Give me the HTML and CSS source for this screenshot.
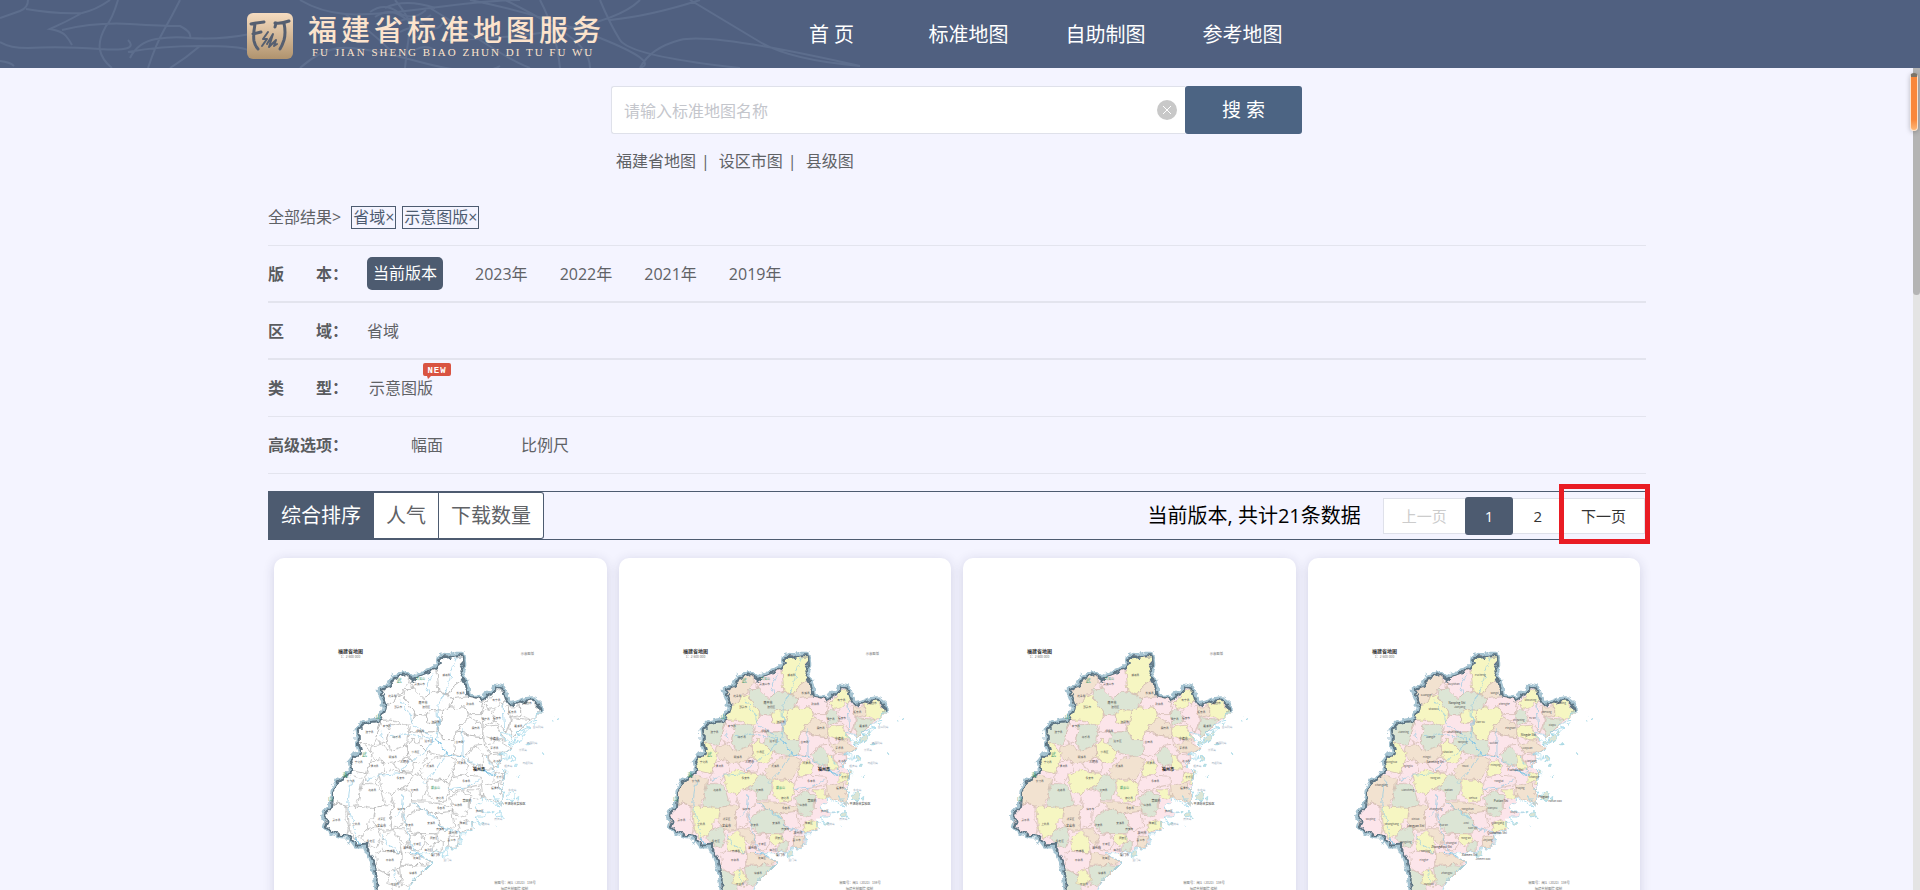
FILE: index.html
```html
<!DOCTYPE html>
<html lang="zh-CN">
<head>
<meta charset="utf-8">
<title>福建省标准地图服务</title>
<link rel="stylesheet" href="styles.css">
</head>
<body>
<svg class="defs" aria-hidden="true">
  <defs>
    <filter id="rough" x="-5%" y="-5%" width="110%" height="110%" color-interpolation-filters="sRGB">
      <feTurbulence type="fractalNoise" baseFrequency="0.06" numOctaves="2" seed="4" result="n"/>
      <feDisplacementMap in="SourceGraphic" in2="n" scale="20" xChannelSelector="R" yChannelSelector="G"/>
    </filter>
    <path id="border" d="M337 1060L328 990L318 955L302 925L303 912L270 915L255 895L245 885L225 883L200 875L180 862L185 845L175 830L180 815L198 800L200 770L205 745L218 722L240 710L258 690L255 665L270 645L285 635L278 610L278 585L275 570L290 552L315 545L340 542L352 515L358 490L348 465L342 450L370 440L385 412L412 400L440 420L455 410L490 395L518 375L525 350L545 352L570 345L588 345L590 375L582 390L598 430L605 470L625 472L645 480L670 462L685 455L690 440L708 445L715 475L730 495L755 490L780 480L800 478L815 490L820 515"/>
  </defs>

  <symbol id="map-land" viewBox="24 54 996 1200">
    <g filter="url(#rough)">
      <use href="#border" class="halo"/>
      <path class="land" d="M337 1110L328 990L318 955L302 925L303 912L270 915L255 895L245 885L225 883L200 875L180 862L185 845L175 830L180 815L198 800L200 770L205 745L218 722L240 710L258 690L255 665L270 645L285 635L278 610L275 570L290 552L340 542L352 515L358 490L342 450L370 440L385 412L412 400L440 420L455 410L490 395L518 375L525 350L588 345L590 375L582 390L605 470L625 472L645 480L670 462L685 455L690 440L708 445L715 475L730 495L755 490L800 478L815 490L820 515L805 530L800 545L775 555L770 570L750 580L740 590L720 580L705 590L715 600L730 620L725 635L700 640L712 655L690 675L715 700L712 730L700 745L710 770L705 795L690 775L680 765L645 770L650 780L620 800L640 815L670 815L650 830L620 830L615 850L620 870L600 880L580 880L585 905L570 925L545 920L540 930L500 940L450 940L480 955L500 965L480 985L460 1000L440 1025L425 1050L405 1090Z"/>
      <g class="county">
        <path class="o" d="M346 455L372 440L385 412L412 400L432 425L415 445L395 470L380 490L358 498Z"/>
        <path class="p" d="M432 425L490 395L512 388L520 430L518 456L500 455L470 475L440 445Z"/>
        <path class="y" d="M512 388L525 352L586 347L585 390L592 416L565 435L545 465L518 456Z"/>
        <path class="o" d="M565 435L592 416L605 470L590 478L560 475L545 465Z"/>
        <path class="g" d="M415 445L440 445L470 475L500 455L545 465L560 475L550 500L528 510L490 508L480 525L445 522L425 490L410 462Z"/>
        <path class="y" d="M358 498L380 490L395 470L410 462L425 490L445 522L445 552L420 555L375 540L345 540Z"/>
        <path class="p" d="M560 475L605 470L652 485L645 520L610 520L600 505L550 500Z"/>
        <path class="y" d="M528 510L550 500L600 505L610 530L590 550L562 598L530 598L515 568L520 545Z"/>
        <path class="y" d="M490 508L528 510L520 545L485 550L480 525Z"/>
        <path class="p" d="M445 522L480 525L485 550L520 548L515 568L500 575L470 575L430 570Z"/>
        <path class="o" d="M590 550L610 530L650 558L650 590L610 585L575 575Z"/>
        <path class="p" d="M570 575L610 585L650 590L655 612L622 615L595 650L562 638L562 600Z"/>
        <path class="g" d="M470 575L500 575L515 568L530 598L562 598L565 638L540 650L500 640L485 635L460 610Z"/>
        <path class="g" d="M275 570L290 552L315 545L345 540L332 580L320 615L278 608Z"/>
        <path class="p" d="M345 540L375 540L370 560L362 600L342 612L328 592Z"/>
        <path class="g" d="M370 558L410 550L430 570L425 600L405 625L375 632L362 600Z"/>
        <path class="y" d="M420 612L440 600L460 610L485 635L470 672L445 665L425 645Z"/>
        <path class="o" d="M318 618L345 612L375 632L418 615L425 648L388 668L350 670L315 645Z"/>
        <path class="y" d="M278 605L300 615L318 640L310 668L300 700L258 690L255 665L285 635Z"/>
        <path class="p" d="M310 668L345 655L357 685L340 705L325 732L298 718Z"/>
        <path class="p" d="M385 665L425 648L445 665L440 695L400 697Z"/>
        <path class="y" d="M340 708L370 690L400 697L445 700L430 730L400 748L380 765L350 755Z"/>
        <path class="o" d="M203 745L220 720L258 705L290 715L280 760L265 798L245 800L215 785L198 795Z"/>
        <path class="g" d="M285 730L330 730L345 757L355 790L325 805L300 815L275 795Z"/>
        <path class="o" d="M460 690L500 655L540 645L568 660L560 690L540 718L500 715L478 725Z"/>
        <path class="g" d="M445 700L480 715L480 750L470 780L440 778L412 750Z"/>
        <path class="y" d="M485 722L530 718L550 740L540 782L510 785L485 765Z"/>
        <path class="y" d="M565 672L585 658L607 675L600 705L560 707Z"/>
        <path class="g" d="M605 650L625 615L650 640L655 672L622 680Z"/>
        <path class="p" d="M545 740L560 712L605 705L645 708L645 733L600 742L560 755Z"/>
        <path class="p" d="M375 760L405 745L435 755L437 790L410 820L410 850L375 865L370 830L385 800Z"/>
        <path class="o" d="M325 805L355 790L385 800L370 830L372 868L340 870L322 840Z"/>
        <path class="p" d="M195 800L215 785L240 800L240 840L250 860L245 885L200 875L180 862L178 820Z"/>
        <path class="y" d="M245 800L280 798L325 805L320 832L302 850L300 880L265 895L250 870Z"/>
        <path class="g" d="M300 870L335 858L345 890L330 925L305 912L288 895Z"/>
        <path class="o" d="M437 785L490 785L545 795L575 802L560 815L505 820L460 805Z"/>
        <path class="g" d="M425 825L460 805L505 820L520 850L535 872L480 880L440 878L418 850Z"/>
        <path class="p" d="M505 820L560 812L565 855L535 872Z"/>
        <path class="g" d="M550 772L585 752L612 770L612 812L575 832L560 808Z"/>
        <path class="o" d="M645 735L690 728L705 745L708 790L650 770Z"/>
        <path class="y" d="M605 750L640 745L650 770L625 778Z"/>
        <path class="y" d="M342 905L375 868L400 892L408 932L370 937L350 928Z"/>
        <path class="o" d="M380 865L415 865L432 890L422 918L400 895Z"/>
        <path class="p" d="M432 885L465 880L475 905L460 932L430 925Z"/>
        <path class="y" d="M475 880L512 880L516 902L490 917L475 905Z"/>
        <path class="p" d="M328 940L355 930L406 936L405 978L370 1005L332 980Z"/>
        <path class="o" d="M408 938L450 945L500 965L460 972L408 975Z"/>
        <path class="g" d="M400 980L460 972L490 975L460 1005L435 1030L405 1035Z"/>
        <path class="g" d="M330 985L370 1005L380 1100L337 1100Z"/>
        <path class="y" d="M370 992L390 985L405 1015L395 1037L365 1030Z"/>
        <path class="y" d="M655 490L685 455L708 445L716 482L700 500L670 508Z"/>
        <path class="g" d="M645 518L670 505L682 545L650 555Z"/>
        <path class="p" d="M680 515L700 490L725 500L732 540L722 578L705 562L685 545Z"/>
        <path class="o" d="M725 500L757 500L765 525L732 532Z"/>
        <path class="y" d="M757 492L800 478L820 515L795 540L765 525Z"/>
        <path class="g" d="M735 532L790 538L770 560L740 590L730 560Z"/>
        <path class="y" d="M650 560L690 555L715 600L680 597L650 585Z"/>
        <path class="o" d="M655 612L700 600L730 620L725 635L670 637Z"/>
        <path class="p" d="M665 645L705 640L705 668L682 682Z"/>
        <path class="y" d="M685 700L715 695L712 730L682 725Z"/>
        <path class="y" d="M648 645L665 650L682 688L655 690Z"/>
        <path class="y" d="M575 850L600 840L620 850L615 870L580 877Z"/>
        <path class="o" d="M545 890L580 885L577 920L548 920Z"/>
        <path class="g" d="M505 905L528 902L528 930L500 937Z"/>
      </g>
      <use href="#border" class="edge"/>
      <path class="coast" d="M820 515L800 530L812 540L790 548L775 555L790 560L770 570L752 575L760 590L740 600L735 585L720 580L700 575L708 595L725 600L735 618L725 635L700 640L730 650L712 655L690 675L715 700L712 730L700 745L715 755L710 770L705 795L690 775L680 765L700 800L645 770L650 780L620 800L640 815L670 815L650 830L620 830L640 845L615 850L625 865L600 880L580 880L585 905L570 925L545 920L540 930L500 940L450 940L480 955L500 965L480 985L460 1000L440 1025L425 1050"/>
      <path class="isle" d="M750 590l12-8 10 4-4 14-14 8-10-4zM770 575l8-4 2 8-8 4zM728 605l10-2 4 8-10 2zM735 650l10 2-2 10-10-2zM724 765l12-8 8 10-8 14-12-4zM752 770l8 4-4 6zM690 820l12-4 4 10-12 4zM705 830l8 0 0 8zM678 810l6 4-6 4zM525 940l14-6 10 8-14 8-10-2zM800 550l10 2-6 6zM775 610l8-4 2 8zM748 672l8 0-4 8zM755 705l6 2-4 4zM828 640l4 0-2 4zM855 541l5 1-2 4zM872 532l4 1-2 3zM686 856l4 0-2 3zM640 850l10-8 2 10zM715 690l10 4-4 8z"/>
    </g>
  </symbol>

  <symbol id="map-rivers" viewBox="24 54 996 1200">
    <g class="river" filter="url(#rough)">
      <path d="M570 350L555 400L545 440L515 500L518 560L510 600L545 640L590 650L640 680L670 705L690 690M500 400L480 440L490 465M400 480L430 520L445 560L480 575L500 600M345 570L350 600M370 590L430 580L500 600M500 600L470 640L430 665L400 700L340 705L300 720M540 640L500 700L470 730M590 570L590 650M255 715L245 790L262 860L275 905M410 760L405 810L385 830M410 820L425 860L430 900L450 940M545 745L600 740L640 720M440 790L490 820L530 860L580 875M350 880L360 910L400 935M385 985L390 1030M710 490L715 570M660 650L680 690"/>
      <path class="wide" d="M510 600L545 640L590 650M640 690L690 705M270 895L280 912M430 935L475 948"/>
    </g>
  </symbol>

  <symbol id="map-cn" viewBox="24 54 996 1200">
    <g class="names">
      <text x="540" y="406">浦城县</text><text x="460" y="435">武夷山市</text><text x="378" y="470">光泽县</text><text x="583" y="461">松溪县</text><text x="612" y="493">政和县</text><text x="396" y="504">邵武市</text><text x="480" y="503">建阳区</text><text x="508" y="547">建瓯市</text><text x="462" y="575">顺昌县</text><text x="487" y="606">延平区</text><text x="362" y="559">泰宁县</text><text x="310" y="579">建宁县</text><text x="392" y="594">将乐县</text><text x="628" y="565">屏南县</text><text x="580" y="609">古田县</text><text x="658" y="539">周宁县</text><text x="692" y="535">福安市</text><text x="690" y="483">寿宁县</text><text x="738" y="518">柘荣县</text><text x="784" y="490">福鼎市</text><text x="756" y="559">霞浦县</text><text x="684" y="627">罗源县</text><text x="692" y="666">连江县</text><text x="702" y="714">长乐区</text><text x="686" y="747">福清市</text><text x="600" y="725">永泰县</text><text x="586" y="672">闽清县</text><text x="492" y="681">尤溪县</text><text x="448" y="637">沙县区</text><text x="380" y="654">明溪县</text><text x="278" y="669">宁化县</text><text x="325" y="681">清流县</text><text x="403" y="717">永安市</text><text x="318" y="752">连城县</text><text x="254" y="725">长汀县</text><text x="445" y="753">大田县</text><text x="521" y="777">德化县</text><text x="524" y="806">永春县</text><text x="576" y="798">仙游县</text><text x="405" y="809">漳平市</text><text x="346" y="838">新罗区</text><text x="211" y="841">武平县</text><text x="270" y="855">上杭县</text><text x="314" y="906">永定区</text><text x="495" y="852">安溪县</text><text x="430" y="858">华安县</text><text x="522" y="868">南安市</text><text x="503" y="897">同安区</text><text x="453" y="913">长泰区</text><text x="374" y="936">南靖县</text><text x="371" y="961">平和县</text><text x="440" y="1000">漳浦县</text><text x="386" y="1034">云霄县</text><text x="640" y="816">秀屿区</text><text x="592" y="850">泉港区</text><text x="556" y="902">晋江市</text><text x="486" y="933">海沧区</text><text x="452" y="957">龙海区</text>
      <g class="city"><text x="470" y="491">南平市</text><text x="415" y="668">三明市</text><text x="346" y="860">龙岩市</text><text x="602" y="784">莆田市</text><text x="684" y="598">宁德市</text><text x="560" y="882">泉州市</text><text x="424" y="926">漳州市</text><text x="508" y="947">厦门市</text><text class="capital" x="638" y="691">福州市</text><text x="746" y="793">平潭综合实验区</text></g>
      <g class="sea"><text x="815" y="564">台山列岛</text><text x="797" y="611">四礵列岛</text><text x="770" y="632">浮鹰岛</text><text x="784" y="671">马祖列岛</text><text x="726" y="679">粗芦岛</text><text x="738" y="752">东庠岛</text><text x="658" y="855">湄洲岛</text><text x="544" y="962">金门岛</text><text x="696" y="838">南日岛</text></g>
      <g class="range"><text x="399" y="426">武</text><text x="336" y="534">山</text><text x="295" y="648">武</text><text x="237" y="708">夷</text><text x="193" y="778">山</text><text class="peak" x="463" y="420">武夷山</text><text class="peak" x="508" y="746">戴云山</text></g>
    </g>
    <text class="edition" x="783" y="345">示意图版</text>
  </symbol>

  <symbol id="map-en" viewBox="24 54 996 1200">
    <g class="names">
      <text x="540" y="406">Pucheng</text><text x="460" y="433">Wuyishan</text><text x="378" y="466">Guangze</text><text x="583" y="461">Songxi</text><text x="612" y="495">Zhenghe</text><text x="400" y="508">Shaowu</text><text x="478" y="503">Jianyang</text><text x="540" y="548">Jian'ou</text><text x="462" y="577">Shunchang</text><text x="487" y="607">Yanping</text><text x="310" y="579">Jianning</text><text x="392" y="594">Jiangle</text><text x="630" y="565">Pingnan</text><text x="580" y="610">Gutian</text><text x="655" y="541">Zhouning</text><text x="696" y="535">Fu'an</text><text x="690" y="483">Shouning</text><text x="738" y="518">Zherong</text><text x="784" y="490">Fuding</text><text x="756" y="557">Xiapu</text><text x="680" y="627">Luoyuan</text><text x="692" y="665">Lianjiang</text><text x="702" y="714">Changle</text><text x="660" y="745">Fuqing</text><text x="596" y="725">Yongtai</text><text x="586" y="678">Minqing</text><text x="495" y="681">Youxi</text><text x="443" y="637">Shaxian</text><text x="380" y="654">Mingxi</text><text x="275" y="667">Ninghua</text><text x="325" y="681">Qingliu</text><text x="405" y="717">Yong'an</text><text x="323" y="752">Liancheng</text><text x="244" y="738">Changting</text><text x="445" y="753">Datian</text><text x="518" y="776">Dehua</text><text x="502" y="809">Yongchun</text><text x="576" y="806">Xianyou</text><text x="407" y="810">Zhangping</text><text x="346" y="838">Xinluo</text><text x="211" y="840">Wuping</text><text x="275" y="855">Shanghang</text><text x="317" y="907">Yongding</text><text x="498" y="852">Anxi</text><text x="430" y="858">Hua'an</text><text x="517" y="866">Nan'an</text><text x="497" y="897">Tong'an</text><text x="453" y="912">Changtai</text><text x="376" y="936">Nanjing</text><text x="371" y="961">Pinghe</text><text x="440" y="1000">Zhangpu</text><text x="386" y="1034">Yunxiao</text><text x="640" y="818">Xiuyu</text><text x="592" y="850">Quangang</text><text x="562" y="902">Jinjiang</text><text x="764" y="786">Haitan Dao</text><text x="548" y="960">Jinmen Dao</text>
      <g class="city"><text x="470" y="490">Nanping Shi</text><text x="405" y="669">Sanming Shi</text><text x="346" y="860">Longyan Shi</text><text x="602" y="786">Putian Shi</text><text x="684" y="586">Ningde Shi</text><text x="590" y="882">Quanzhou Shi</text><text x="424" y="924">Zhangzhou Shi</text><text x="508" y="946">Xiamen Shi</text><text x="645" y="692">Fuzhou Shi</text><text x="730" y="772">Pingtan</text></g>
    </g>
  </symbol>

  <symbol id="map-caption" viewBox="24 54 996 1200">
    <text class="sheet-title" x="253" y="338">福建省地图</text>
    <text class="sheet-note" x="253" y="355">1：2 600 000</text>
    <text class="sheet-note" x="746" y="1031">审图号：闽S〔2023〕159号</text>
    <text class="sheet-note" x="744" y="1048">福建省制图院 编制</text>
  </symbol>
</svg>

<header class="topbar">
  <svg class="topbar-lines" viewBox="0 0 900 68" preserveAspectRatio="xMinYMid slice" aria-hidden="true">
    <path d="M28 0Q28 8 20 11L0 18M26 9Q54 14 82 13Q96 10 110 0M82 13Q66 22 50 29Q62 31 66 36T72 45M62 30Q96 22 130 24T180 26Q192 32 190 38Q174 36 156 39T130 58M0 42Q10 48 28 48Q60 46 100 49T128 40M118 0Q112 20 106 26Q98 40 100 50T112 68M180 0Q172 16 164 30T148 68M128 52Q160 46 200 46T248 50M200 46Q186 58 170 68M0 61Q10 62 14 66M190 38Q220 40 250 34M300 0Q320 12 345 14T430 8T520 0M300 68Q320 50 340 48T420 62T500 66M345 14Q370 30 390 50M395 0Q412 20 410 30T405 68M430 8Q450 20 480 40T530 68M505 0Q530 12 560 30T590 68M470 0Q540 14 600 38T640 68M440 40Q500 40 560 30T640 0M540 0Q556 30 560 68M600 0Q610 24 620 40T740 68M610 20Q650 16 700 0M640 68Q650 48 680 40T860 66M690 0Q730 24 760 42T860 66"/>
    <path d="M370 12q14-10 28 0t28-2M375 17q14-10 28 0t28-2M395 24q14-10 28 0t20-2M400 32q14-8 24 0M410 40q14-8 24 0M415 50q10-6 20 0M385 8q20-10 50 0"/>
  </svg>
  <a class="brand" href="#">
    <svg class="brand-mark" viewBox="0 0 46 46" aria-hidden="true">
      <defs><linearGradient id="gold" x2="0" y2="1"><stop offset="0" stop-color="#f6dcc0"/><stop offset="1" stop-color="#b0936e"/></linearGradient></defs>
      <rect width="46" height="46" rx="6" fill="url(#gold)"/>
      <path class="ink" d="M4 11Q8 10 17 9M8 11Q6 22 7 28Q8 33 11 36M6 21L14 19M28 10Q34 11 42 8M29 10L28 14M37 10Q39 20 37 27Q35 33 33 36"/>
      <path class="ink fine" d="M21 19L16 26L20 26L15 33M20 31L26 21L22 34L29 27L27 33L30 31"/>
    </svg>
    <span class="brand-text">
      <strong>福建省标准地图服务</strong>
      <small>FU JIAN SHENG BIAO ZHUN DI TU FU WU</small>
    </span>
  </a>
  <nav class="nav">
    <a href="#">首 页</a><a href="#">标准地图</a><a href="#">自助制图</a><a href="#">参考地图</a>
  </nav>
</header>

<main class="page">
  <form class="search">
    <div class="search-field">
      <input type="text" aria-label="标准地图名称" placeholder="请输入标准地图名称">
      <button class="clear" type="button" aria-label="清空">
        <svg viewBox="0 0 20 20"><circle cx="10" cy="10" r="10"/><path d="M6 6l8 8M14 6l-8 8"/></svg>
      </button>
    </div>
    <button class="submit" type="submit">搜 索</button>
  </form>
  <div class="quick"><a href="#">福建省地图</a><i>|</i><a href="#">设区市图</a><i>|</i><a href="#">县级图</a></div>

  <section class="filters">
    <div class="crumbs"><span>全部结果&gt;</span><button type="button">省域×</button><button type="button">示意图版×</button></div>
    <div class="row thick"><b class="name"><span>版</span><span>本：</span></b><div class="years"><a class="on" href="#">当前版本</a><a href="#">2023年</a><a href="#">2022年</a><a href="#">2021年</a><a href="#">2019年</a></div></div>
    <div class="row thick"><b class="name"><span>区</span><span>域：</span></b><a href="#">省域</a></div>
    <div class="row"><b class="name"><span>类</span><span>型：</span></b><a class="with-badge" href="#">示意图版<svg class="badge" viewBox="0 0 28 16" aria-label="NEW"><path d="M2 0h24q2 0 2 2v9q0 2-2 2H8l-3 3-1-3H2q-2 0-2-2V2q0-2 2-2z"/><text x="14" y="10">NEW</text></svg></a></div>
    <div class="row"><b class="name">高级选项：</b><div class="advanced"><a href="#">幅面</a><a href="#">比例尺</a></div></div>
  </section>

  <section class="toolbar">
    <div class="sorts"><button class="on" type="button">综合排序</button><button type="button">人气</button><button type="button">下载数量</button></div>
    <p class="total">当前版本, 共计21条数据</p>
    <div class="pager">
      <button type="button" disabled>上一页</button><button class="on" type="button">1</button><button type="button">2</button><span class="next"><button type="button">下一页</button></span>
    </div>
  </section>

  <section class="cards">
    <a class="card" href="#"><svg class="map blank" viewBox="0 0 996 1200"><use href="#map-land"/><use href="#map-rivers"/><use href="#map-cn"/><use href="#map-caption"/></svg></a>
    <a class="card" href="#"><svg class="map" viewBox="0 0 996 1200"><use href="#map-land"/><use href="#map-rivers"/><use href="#map-cn"/><use href="#map-caption"/></svg></a>
    <a class="card" href="#"><svg class="map" viewBox="0 0 996 1200"><use href="#map-land"/><use href="#map-cn"/><use href="#map-caption"/></svg></a>
    <a class="card" href="#"><svg class="map" viewBox="0 0 996 1200"><use href="#map-land"/><use href="#map-rivers"/><use href="#map-en"/><use href="#map-caption"/></svg></a>
  </section>
</main>
<div class="scrollbar" aria-hidden="true"><i class="thumb"></i><i class="marker"></i></div>
</body>
</html>
```
FILE: styles.css
```css
* { box-sizing: border-box; }
body {
  margin: 0;
  height: 100vh;
  display: flex;
  flex-direction: column;
  background: #f4f4ff;
  color: #606266;
  font: 16px/24px "Open Sans", "Noto Sans CJK SC", sans-serif;
}
a { color: inherit; text-decoration: none; }
i { font-style: normal; }
button, input { font: inherit; color: inherit; margin: 0; border: 0; background: none; padding: 0; }
.defs { position: absolute; width: 0; height: 0; }

.topbar {
  position: relative;
  flex: none;
  height: 68px;
  padding-left: 247px;
  display: flex;
  align-items: center;
  background: #506080;
  color: #fff;
}
.topbar-lines { position: absolute; top: 0; left: 0; width: 900px; height: 68px; fill: none; stroke: #6b7c9b; stroke-width: 2; opacity: .5; }
.brand { position: relative; display: flex; gap: 15px; width: 516px; padding-top: 4px; }
.brand-mark { width: 46px; height: 46px; }
.ink { fill: none; stroke: #565f70; stroke-width: 3; stroke-linecap: round; stroke-linejoin: round; }
.ink.fine { stroke-width: 2; }
.brand-text { display: flex; flex-direction: column; color: #fce3cc; white-space: nowrap; }
.brand-text strong { font-size: 29px; line-height: 33px; font-weight: 500; letter-spacing: 4px; }
.brand-text small { font: 11px/13px "Liberation Serif", serif; letter-spacing: 2px; padding-left: 4px; }
.nav { position: relative; display: flex; font-size: 20px; }
.nav a { width: 137px; text-align: center; line-height: 28px; padding-top: 1px; }

.page { flex: 1; min-height: 0; overflow-y: auto; scrollbar-width: none; padding: 18px 274px 40px 268px; }
.search { display: flex; width: 691px; margin-left: 343px; height: 48px; }
.search-field { flex: 1; display: flex; align-items: center; background: #fff; border: 1px solid #dfe1ea; border-right: 0; border-radius: 3px 0 0 3px; padding: 0 8px 0 12px; }
.search-field input { flex: 1; outline: 0; height: 44px; padding-top: 2px; }
.search-field input::placeholder { color: #c4c6cc; }
.clear { width: 20px; height: 20px; }
.clear svg { display: block; fill: #c8c8c8; }
.clear path { stroke: #fff; stroke-width: 1; }
.submit { width: 117px; background: #4c6483; color: #fff; font-size: 19px; border-radius: 3px; }
.quick { display: flex; margin: 15px 0 0 348px; }
.quick i { margin: 0 9px 0 5px; }

.filters { margin-top: 32px; }
.crumbs { display: flex; align-items: center; height: 41px; padding-bottom: 16px; border-bottom: 1px solid #e3e4ee; }
.crumbs span { margin-right: 10px; }
.crumbs button { border: 1px solid #4d5b70; height: 23px; line-height: 20px; margin-right: 6px; padding: 0 1px; color: #4d5b70; }
.row { display: flex; align-items: center; height: 57px; border-bottom: 1px solid #e3e4ee; }
.row.thick { border-bottom-width: 2px; }
.name { display: flex; justify-content: space-between; width: 80px; margin-right: 19px; color: #5a5c60; white-space: nowrap; }
.years { display: flex; align-items: center; gap: 32px; }
.years .on { background: #4d5b70; color: #fff; border-radius: 5px; padding: 4px 6px 5px; }
.with-badge { position: relative; padding-left: 2px; }
.badge { position: absolute; left: 56px; top: -13px; width: 28px; height: 16px; fill: #d95442; }
.badge text { fill: #fff; font: bold 9px "Liberation Mono", monospace; letter-spacing: 1px; text-anchor: middle; }
.advanced { display: flex; gap: 78px; padding-left: 44px; }

.toolbar { display: flex; align-items: center; margin-top: 17px; height: 49px; border: 1px solid #4d5b70; }
.sorts { display: flex; align-self: stretch; font-size: 20px; background: #fff; border: 1px solid #4d5b70; border-width: 1px 1px 1px 0; border-radius: 3px; }
.sorts button { padding: 0 12px; border-left: 1px solid #4d5b70; }
.sorts .on { background: #4d5b70; color: #fff; margin: -1px 0; padding: 0 12px 0 11px; }
.total { margin: 0 22px 0 auto; font-size: 20px; color: #000; }
.pager { display: flex; align-items: center; font-size: 15px; color: #333; }
.pager button { height: 36px; background: #fff; border: 1px solid #dfe1ea; border-width: 1px 0; padding: 0 20px; }
.pager button:disabled { color: #ccc; border-left-width: 1px; padding: 0 18px; }
.pager .on { height: 38px; background: #4d5b70; color: #fff; border-radius: 3px; border: 0; }
.next { position: relative; }
.pager .next button { border-width: 1px; padding: 0 18px; }
.next::after { content: ""; position: absolute; inset: -14px -5px -10px -3px; border: 5px solid #e91c24; }

.cards { display: grid; grid-template-columns: repeat(4, 1fr); gap: 12px; padding: 18px 6px; }
.card { background: #fff; border-radius: 10px; box-shadow: 0 2px 12px rgba(40, 40, 90, .16); }
.map { display: block; width: 100%; font-family: "Noto Sans CJK SC", sans-serif; --o: #f2e2d0; --p: #fce5ea; --y: #f6f6c2; --g: #dce5d5; --line: #cdb6aa; }
.map.blank { --o: #fff; --p: #fff; --y: #fff; --g: #fff; --line: #aaa; }
.halo { fill: none; stroke: #a5c3d1; stroke-width: 20; stroke-linejoin: round; }
.land { fill: var(--p); }
.county { stroke: var(--line); stroke-width: 2; }
.o { fill: var(--o); }
.p { fill: var(--p); }
.y { fill: var(--y); }
.g { fill: var(--g); }
.edge { fill: none; stroke: #5d7584; stroke-width: 6; stroke-linejoin: round; }
.coast { fill: none; stroke: #8fd0e6; stroke-width: 2; }
.isle { fill: var(--g); stroke: #8fd0e6; stroke-width: 2; }
.river { fill: none; stroke: #8cc8e4; stroke-width: 2; }
.river .wide { stroke-width: 4; }
.names { font-size: 8px; text-anchor: middle; fill: #555; }
.city { font-size: 9px; fill: #333; }
.capital { font-size: 12px; font-weight: bold; fill: #111; }
.sea { fill: #9ab; }
.range { font-size: 15px; fill: #3f9a6a; }
.peak { font-size: 9px; }
.edition { font-size: 10px; text-anchor: middle; fill: #777; }
.sheet-title { font-size: 15px; font-weight: bold; text-anchor: middle; fill: #333; }
.sheet-note { font-size: 10px; text-anchor: middle; fill: #777; }

.scrollbar { position: fixed; top: 68px; right: 0; bottom: 0; width: 7px; background: #e4e4e4; }
.thumb { display: block; height: 227px; background: #b4b4b4; border-radius: 0 0 4px 4px; }
.marker { position: absolute; top: 5px; right: 2px; width: 8px; height: 58px; border: 1px solid #ffe2c8; border-top: 4px solid #7d7468; border-radius: 4px; background: linear-gradient(#f9873a 80%, #fdb878); box-shadow: 0 1px 5px rgba(0, 0, 0, .25); }
```
